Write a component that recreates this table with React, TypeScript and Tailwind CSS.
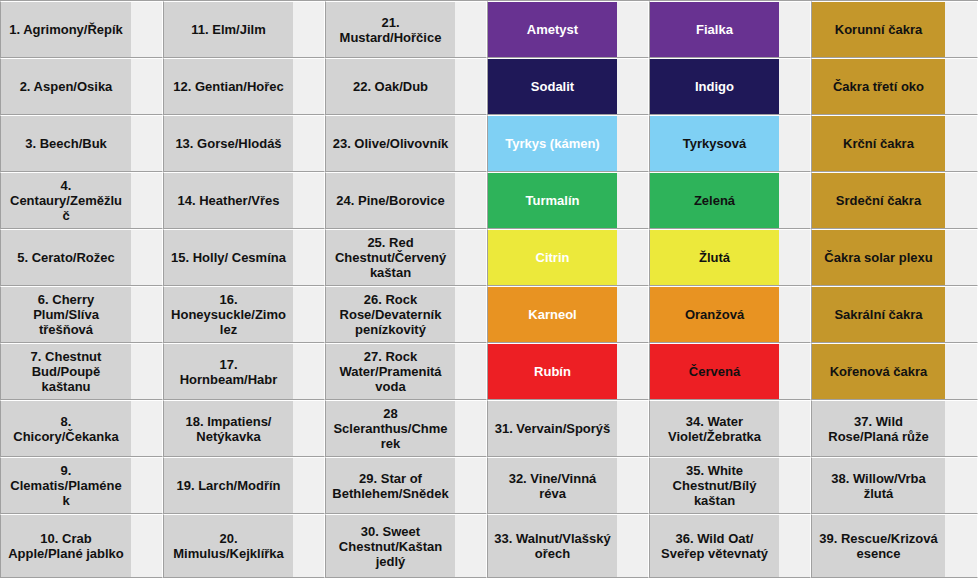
type Cell = { text: string; bg: string; fg: string }

const GRAY = 'bg-[#d3d3d3]'
const DARK = 'text-[#111111]'
const WHITE = 'text-white'

const g = (text: string): Cell => ({ text, bg: GRAY, fg: DARK })

const COLS: Cell[][] = [
  [
    g('1. Agrimony/Řepík'),
    g('2. Aspen/Osika'),
    g('3. Beech/Buk'),
    g('4.\nCentaury/Zeměžlu\nč'),
    g('5. Cerato/Rožec'),
    g('6. Cherry\nPlum/Slíva\ntřešňová'),
    g('7. Chestnut\nBud/Poupě\nkaštanu'),
    g('8.\nChicory/Čekanka'),
    g('9.\nClematis/Plaméne\nk'),
    g('10. Crab\nApple/Plané jablko'),
  ],
  [
    g('11. Elm/Jilm'),
    g('12. Gentian/Hořec'),
    g('13. Gorse/Hlodáš'),
    g('14. Heather/Vřes'),
    g('15. Holly/ Cesmína'),
    g('16.\nHoneysuckle/Zimo\nlez'),
    g('17.\nHornbeam/Habr'),
    g('18. Impatiens/\nNetýkavka'),
    g('19. Larch/Modřín'),
    g('20.\nMimulus/Kejklířka'),
  ],
  [
    g('21.\nMustard/Hořčice'),
    g('22. Oak/Dub'),
    g('23. Olive/Olivovník'),
    g('24. Pine/Borovice'),
    g('25. Red\nChestnut/Červený\nkaštan'),
    g('26. Rock\nRose/Devaterník\npenízkovitý'),
    g('27. Rock\nWater/Pramenitá\nvoda'),
    g('28\nScleranthus/Chme\nrek'),
    g('29. Star of\nBethlehem/Snědek'),
    g('30. Sweet\nChestnut/Kaštan\njedlý'),
  ],
  [
    { text: 'Ametyst', bg: 'bg-[#683291]', fg: WHITE },
    { text: 'Sodalit', bg: 'bg-[#1f1858]', fg: WHITE },
    { text: 'Tyrkys (kámen)', bg: 'bg-[#7fd0f4]', fg: WHITE },
    { text: 'Turmalín', bg: 'bg-[#2eb35a]', fg: WHITE },
    { text: 'Citrin', bg: 'bg-[#ece93b]', fg: WHITE },
    { text: 'Karneol', bg: 'bg-[#e89322]', fg: WHITE },
    { text: 'Rubín', bg: 'bg-[#ed1f24]', fg: WHITE },
    g('31. Vervain/Sporýš'),
    g('32. Vine/Vinná\nréva'),
    g('33. Walnut/Vlašský\nořech'),
  ],
  [
    { text: 'Fialka', bg: 'bg-[#683291]', fg: WHITE },
    { text: 'Indigo', bg: 'bg-[#1f1858]', fg: WHITE },
    { text: 'Tyrkysová', bg: 'bg-[#7fd0f4]', fg: DARK },
    { text: 'Zelená', bg: 'bg-[#2eb35a]', fg: DARK },
    { text: 'Žlutá', bg: 'bg-[#ece93b]', fg: DARK },
    { text: 'Oranžová', bg: 'bg-[#e89322]', fg: DARK },
    { text: 'Červená', bg: 'bg-[#ed1f24]', fg: DARK },
    g('34. Water\nViolet/Žebratka'),
    g('35. White\nChestnut/Bílý\nkaštan'),
    g('36. Wild Oat/\nSveřep větevnatý'),
  ],
  [
    { text: 'Korunní čakra', bg: 'bg-[#c4972b]', fg: DARK },
    { text: 'Čakra třetí oko', bg: 'bg-[#c4972b]', fg: DARK },
    { text: 'Krční čakra', bg: 'bg-[#c4972b]', fg: DARK },
    { text: 'Srdeční čakra', bg: 'bg-[#c4972b]', fg: DARK },
    { text: 'Čakra solar plexu', bg: 'bg-[#c4972b]', fg: DARK },
    { text: 'Sakrální čakra', bg: 'bg-[#c4972b]', fg: DARK },
    { text: 'Kořenová čakra', bg: 'bg-[#c4972b]', fg: DARK },
    g('37. Wild\nRose/Planá růže'),
    g('38. Willow/Vrba\nžlutá'),
    g('39. Rescue/Krizová\nesence'),
  ],
]

const CELL_W = ['w-[161px]', 'w-[160px]', 'w-[160px]', 'w-[160px]', 'w-[160px]', 'w-[165px]']
const BOX_W = ['w-[130px]', 'w-[129px]', 'w-[129px]', 'w-[129px]', 'w-[129px]', 'w-[133px]']

export default function App() {
  const rows = Array.from({ length: 10 }, (_, r) => r)
  return (
    <div
      className="w-[979px] h-[579px] bg-white overflow-hidden"
      style={{ fontFamily: '"Liberation Sans", Arial, sans-serif' }}
    >
      <div className="flex flex-col border-t border-[#a0a0a0] w-max">
        {rows.map(r => (
          <div key={r} className="flex">
            {COLS.map((col, c) => {
              const cell = col[r]
              return (
                <div
                  key={c}
                  className={`box-content flex ${CELL_W[c]} ${r === 9 ? 'h-[62px]' : 'h-[55px]'} bg-[#f0f0f0] border-l border-b border-[#a0a0a0] border-r border-r-white border-t border-t-white`}
                >
                  <div
                    className={`${BOX_W[c]} h-full ${cell.bg} ${cell.fg} flex items-center justify-center px-[2px] text-center text-[13px] leading-[15px] font-bold whitespace-pre-line`}
                  >
                    {cell.text}
                  </div>
                </div>
              )
            })}
          </div>
        ))}
      </div>
    </div>
  )
}
